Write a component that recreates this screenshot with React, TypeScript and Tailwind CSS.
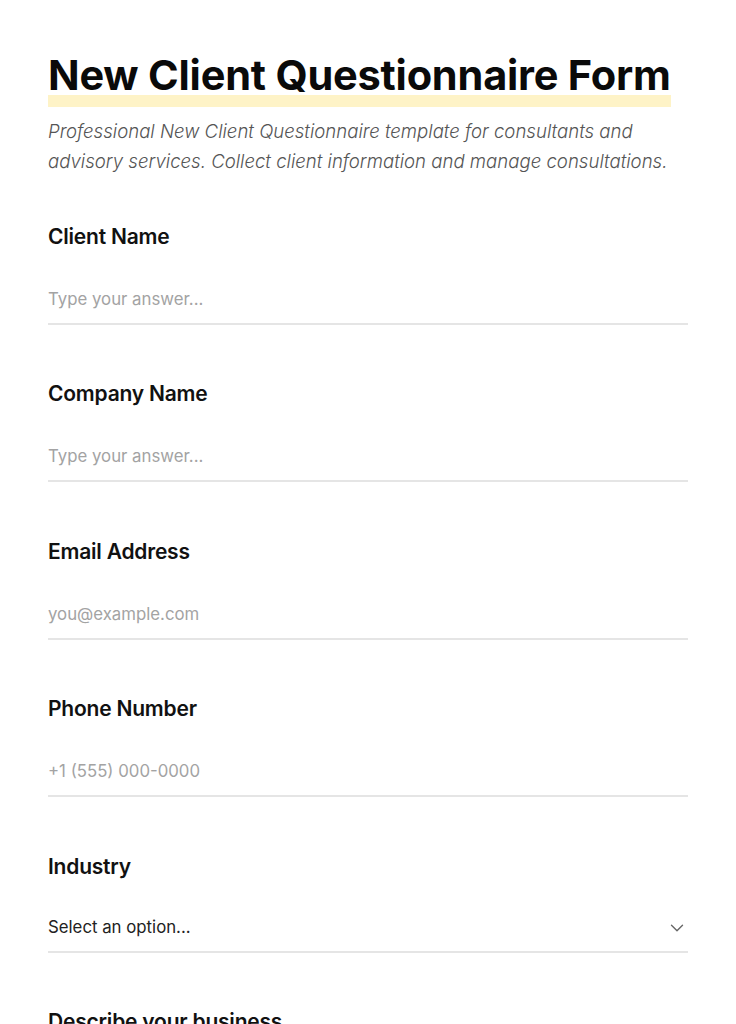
import { ChevronDown } from "lucide-react";

const fields = [
  { label: "Client Name", placeholder: "Type your answer...", type: "text" },
  { label: "Company Name", placeholder: "Type your answer...", type: "text" },
  { label: "Email Address", placeholder: "you@example.com", type: "email" },
  { label: "Phone Number", placeholder: "+1 (555) 000-0000", type: "tel" },
];

export default function App() {
  return (
    <main className="min-h-screen bg-white px-12 pb-24 pt-[55px] font-['Inter',sans-serif] text-[#111]">
      <h1 className="w-fit bg-[linear-gradient(to_top,#fef3c7_12px,transparent_12px)] pb-[10px] text-[41.5px] font-bold leading-none tracking-[-0.005em] text-[#0a0a0a]">
        New Client Questionnaire Form
      </h1>
      <p className="mt-[9px] text-[18.6px] font-light italic leading-[30px] text-[#555]">
        Professional New Client Questionnaire template for consultants and
        advisory services. Collect client information and manage consultations.
      </p>

      <form className="mt-[47px] flex flex-col gap-[55.5px]">
        {fields.map((f) => (
          <div key={f.label} className="flex flex-col">
            <label className="text-[21px] font-semibold leading-[28px] tracking-[-0.01em] text-[#111]">
              {f.label}
            </label>
            <input
              type={f.type}
              placeholder={f.placeholder}
              className="mt-6 h-[50px] border-b-2 border-[#e5e5e5] bg-transparent text-[16.8px] text-[#222] outline-none placeholder:text-[#a3a3a3]"
            />
          </div>
        ))}

        <div className="flex flex-col">
          <label className="text-[21px] font-semibold leading-[28px] tracking-[-0.01em] text-[#111]">
            Industry
          </label>
          <div className="mt-6 flex h-[48px] items-center justify-between border-b-2 border-[#e5e5e5]">
            <span className="text-[16.8px] text-[#222]">Select an option...</span>
            <ChevronDown className="h-[22px] w-[22px] text-[#666]" strokeWidth={1.5} />
          </div>
        </div>

        <div className="flex flex-col">
          <label className="text-[21px] font-semibold leading-[28px] tracking-[-0.01em] text-[#111]">
            Describe your business
          </label>
          <textarea
            rows={3}
            placeholder="Type your answer..."
            className="mt-6 resize-none border-b-2 border-[#e5e5e5] bg-transparent text-[16.8px] text-[#222] outline-none placeholder:text-[#a3a3a3]"
          />
        </div>
      </form>
    </main>
  );
}
